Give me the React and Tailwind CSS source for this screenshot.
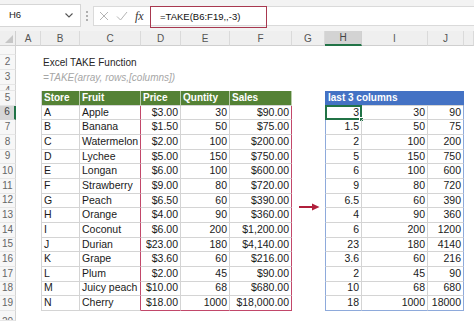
import React from "react";

const colLetters = ["A", "B", "C", "D", "E", "F", "G", "H", "I", "J", ""];

const left = [
  ["A", "Apple", "$3.00", "30", "$90.00"],
  ["B", "Banana", "$1.50", "50", "$75.00"],
  ["C", "Watermelon", "$2.00", "100", "$200.00"],
  ["D", "Lychee", "$5.00", "150", "$750.00"],
  ["E", "Longan", "$6.00", "100", "$600.00"],
  ["F", "Strawberry", "$9.00", "80", "$720.00"],
  ["G", "Peach", "$6.50", "60", "$390.00"],
  ["H", "Orange", "$4.00", "90", "$360.00"],
  ["I", "Coconut", "$6.00", "200", "$1,200.00"],
  ["J", "Durian", "$23.00", "180", "$4,140.00"],
  ["K", "Grape", "$3.60", "60", "$216.00"],
  ["L", "Plum", "$2.00", "45", "$90.00"],
  ["M", "Juicy peach", "$10.00", "68", "$680.00"],
  ["N", "Cherry", "$18.00", "1000", "$18,000.00"],
];

const right = [
  ["3", "30", "90"],
  ["1.5", "50", "75"],
  ["2", "100", "200"],
  ["5", "150", "750"],
  ["6", "100", "600"],
  ["9", "80", "720"],
  ["6.5", "60", "390"],
  ["4", "90", "360"],
  ["6", "200", "1200"],
  ["23", "180", "4140"],
  ["3.6", "60", "216"],
  ["2", "45", "90"],
  ["10", "68", "680"],
  ["18", "1000", "18000"],
];

function TopBar() {
  return (
    <div className="flex items-start h-[31px] bg-[#f3f3f3]">
      <div className="mt-[4px] h-[23px] w-[81px] bg-white border-y border-r border-[#d6d6d6] flex items-center justify-between pl-[9px] pr-[7px] text-[9.5px] text-[#222]">
        <span>H6</span>
        <svg width="8" height="5" viewBox="0 0 8 5">
          <path d="M0.5 0.5 L4 4 L7.5 0.5" fill="none" stroke="#555" strokeWidth="1.1" />
        </svg>
      </div>
      <div className="w-[12px] h-[31px] flex flex-col items-center justify-center gap-[2px]">
        <span className="w-[2px] h-[2px] bg-[#999] rounded-full" />
        <span className="w-[2px] h-[2px] bg-[#999] rounded-full" />
        <span className="w-[2px] h-[2px] bg-[#999] rounded-full" />
      </div>
      <div className="mt-[6px] h-[20px] flex-1 flex bg-white border-y border-l border-[#dadada]">
        <div className="w-[56px] flex items-center pl-[5px]">
          <svg width="10" height="10" viewBox="0 0 10 10">
            <path d="M1 1 L9 9 M9 1 L1 9" stroke="#b4b4b4" strokeWidth="1" fill="none" />
          </svg>
          <svg width="12" height="10" viewBox="0 0 12 10" className="ml-[7px]">
            <path d="M1 5.5 L4.5 9 L11 1" stroke="#b4b4b4" strokeWidth="1" fill="none" />
          </svg>
          <span className="ml-[7px] font-['Liberation_Serif',serif] italic text-[12px] text-[#333] leading-none">
            fx
          </span>
        </div>
        <div className="w-[106px] h-[20px] -my-[1px] box-content border border-[#a8384f] flex items-center pl-[9px] text-[9.5px] text-[#111] whitespace-nowrap">
          =TAKE(B6:F19,,-3)
        </div>
        <div className="flex-1" />
      </div>
    </div>
  );
}

function Corner() {
  return (
    <div className="relative bg-[#efefef] border-r border-b border-[#d0d0d0]">
      <svg width="8" height="8" viewBox="0 0 8 8" className="absolute right-[2px] bottom-[2px]">
        <path d="M8 0 L8 8 L0 8 Z" fill="#c6c6c6" />
      </svg>
    </div>
  );
}

function ColHeader({ letter }) {
  const sel = letter === "H";
  return (
    <div
      className={
        sel
          ? "flex items-center justify-center bg-[#d3d3d3] border-r border-r-[#d0d0d0] border-b-2 border-b-[#217346] text-[10px] text-[#444]"
          : "flex items-center justify-center bg-[#efefef] border-r border-r-[#dadada] border-b border-b-[#cfcfcf] text-[10px] text-[#555]"
      }
    >
      {letter}
    </div>
  );
}

function RowHeader({ r }) {
  const sel = r === 6;
  let inner = <span>{r}</span>;
  let align = "items-center";
  if (r === 1) {
    inner = <span className="-mt-[8px]">{r}</span>;
    align = "items-start";
  } else if (r === 4) {
    inner = <span className="mt-[1px]">{r}</span>;
    align = "items-start";
  } else if (r === 20) {
    inner = <span className="mt-[6px]">{r}</span>;
    align = "items-start";
  }
  return (
    <div
      className={
        sel
          ? `flex ${align} justify-center overflow-hidden leading-none bg-[#d6d6d6] border-r-2 border-r-[#217346] border-b border-b-[#d6d6d6] text-[10px] text-[#444]`
          : `flex ${align} justify-center overflow-hidden leading-none bg-[#f7f7f7] border-r border-r-[#d4d4d4] border-b border-b-[#e6e6e6] text-[10px] text-[#666]`
      }
    >
      {inner}
    </div>
  );
}

function Empty() {
  return <div />;
}

function LeftHeader() {
  const names = ["Store", "Fruit", "Price", "Quntity", "Sales"];
  return names.map((n, i) => (
    <div
      key={n}
      className={
        "flex items-center whitespace-nowrap overflow-hidden px-[2px] bg-[#548235] text-white font-bold text-[10px] border-b border-b-[#d4d4d4] border-r border-r-[#b9cdaa]" +
        (i === 0 ? " border-l border-l-[#d4d4d4]" : "")
      }
    >
      {n}
    </div>
  ));
}

function LeftRow({ data, last }) {
  return data.map((v, i) => {
    let cls =
      "flex items-center whitespace-nowrap overflow-hidden px-[2px] text-[10.5px] text-[#1a1a1a] border-b border-r";
    if (i >= 2) cls += " justify-end";
    if (i === 0) cls += " border-l border-l-[#d4d4d4]";
    if (i === 1 || i === 4) cls += " border-r-[#c2486a]";
    else cls += " border-r-[#d4d4d4]";
    if (last && i >= 2) cls += " border-b-[#c2486a]";
    else cls += " border-b-[#d4d4d4]";
    return (
      <div key={i} className={cls}>
        {v}
      </div>
    );
  });
}

function RightRow({ data, last, first }) {
  return data.map((v, i) => {
    let cls =
      "relative flex items-center justify-end whitespace-nowrap px-[2px] text-[10.5px] text-[#1a1a1a] border-b border-r";
    if (i === 0) cls += " border-l border-l-[#8eaadb]";
    if (i === 2) cls += " border-r-[#8eaadb]";
    else cls += " border-r-[#d4d4d4]";
    if (last) cls += " border-b-[#8eaadb]";
    else cls += " border-b-[#d4d4d4]";
    return (
      <div key={i} className={cls}>
        {v}
        {first && i === 0 && (
          <>
            <span className="absolute -left-[1px] -top-[1px] -right-[1px] -bottom-[1px] border-2 border-[#217346] pointer-events-none" />
            <span className="absolute -right-[3px] -bottom-[3px] w-[5px] h-[5px] bg-[#217346] border border-white" />
          </>
        )}
      </div>
    );
  });
}

function Arrow() {
  return (
    <div className="flex items-end justify-center">
      <svg width="21" height="8" viewBox="0 0 21 8" className="-mb-[3px] ml-[2px]">
        <path d="M0 4 L14 4" stroke="#b01f3b" strokeWidth="2" />
        <path d="M13 0.5 L20.5 4 L13 7.5 Z" fill="#b01f3b" />
      </svg>
    </div>
  );
}

function Row({ r }) {
  const cells = [<RowHeader key="h" r={r} />];
  if (r === 2) {
    cells.push(<Empty key="a" />);
    cells.push(
      <div key="b" className="flex items-center whitespace-nowrap px-[2px] text-[10px] text-[#262626]">
        Excel TAKE Function
      </div>
    );
    for (let i = 0; i < 9; i++) cells.push(<Empty key={"e" + i} />);
  } else if (r === 3) {
    cells.push(<Empty key="a" />);
    cells.push(
      <div key="b" className="flex items-center whitespace-nowrap px-[2px] text-[10px] italic text-[#a6a6a6]">
        =TAKE(array, rows,[columns])
      </div>
    );
    for (let i = 0; i < 9; i++) cells.push(<Empty key={"e" + i} />);
  } else if (r === 5) {
    cells.push(<Empty key="a" />);
    cells.push(<LeftHeader key="lh" />);
    cells.push(<Empty key="g" />);
    cells.push(
      <div
        key="rh"
        className="col-span-3 flex items-center whitespace-nowrap px-[2px] bg-[#4472c4] text-white font-bold text-[10px] border-l border-r border-[#4472c4] border-b border-b-[#d4d4d4]"
      >
        last 3 columns
      </div>
    );
    cells.push(<Empty key="k" />);
  } else if (r >= 6 && r <= 19) {
    const idx = r - 6;
    cells.push(<Empty key="a" />);
    cells.push(<LeftRow key="l" data={left[idx]} last={r === 19} />);
    cells.push(r === 12 ? <Arrow key="g" /> : <Empty key="g" />);
    cells.push(<RightRow key="rr" data={right[idx]} last={r === 19} first={r === 6} />);
    cells.push(<Empty key="k" />);
  } else {
    for (let i = 0; i < 11; i++) cells.push(<Empty key={"e" + i} />);
  }
  return <>{cells}</>;
}

export default function App() {
  const rows = Array.from({ length: 20 }, (_, i) => i + 1);
  return (
    <div className="w-[474px] h-[321px] overflow-hidden bg-white font-['Liberation_Sans',Arial,sans-serif] text-[#1a1a1a]">
      <TopBar />
      <div className="grid h-[290px] grid-cols-[16px_25px_39px_61px_40px_49px_62px_33px_37px_66px_36px_1fr] grid-rows-[15px_9px_15px_15px_6px_repeat(15,14.667px)_1fr]">
        <Corner />
        {colLetters.map((c, i) => (
          <ColHeader key={i} letter={c} />
        ))}
        {rows.map((r) => (
          <Row key={r} r={r} />
        ))}
      </div>
    </div>
  );
}
